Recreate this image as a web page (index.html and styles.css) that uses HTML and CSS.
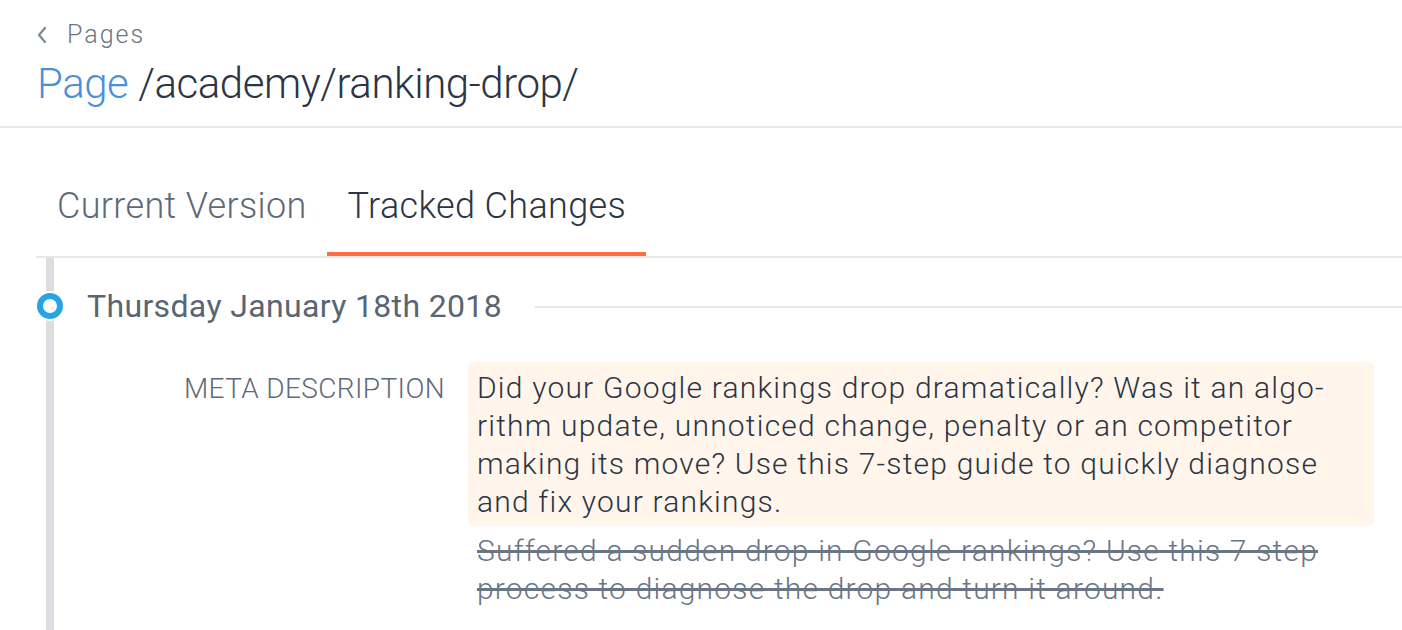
FILE: index.html
```html
<!DOCTYPE html>
<html>
  <head>
    <meta charset="utf-8">
    <title>Page /academy/ranking-drop/</title>
    <link rel="stylesheet" href="styles.css">
  </head>
  <body>
    <div class="header">
      <a class="back" href="#">
        <svg class="back_icon" width="10" height="18" viewBox="0 0 10 18">
          <path d="M8 2 L2 9 L8 16" fill="none" stroke="#7d8794" stroke-width="2.2" stroke-linecap="round" stroke-linejoin="round"/>
        </svg>
        Pages
      </a>
      <h1 class="title"><span class="title_kind">Page</span> /academy/ranking-drop/</h1>
    </div>

    <div class="content">
      <div class="tabs">
        <a class="tab" href="#">Current Version</a>
        <a class="tab tab_active" href="#">Tracked Changes</a>
      </div>

      <div class="timeline">
        <div class="date_row">
          <span class="dot"></span>
          <span class="date">Thursday January 18th 2018</span>
          <span class="date_line"></span>
        </div>

        <div class="field">
          <div class="field_label">META DESCRIPTION</div>
          <div class="field_values">
            <div class="value_new">Did your Google rankings drop dramatically? Was it an algo&shy;rithm update, unnoticed change, penalty or an competitor making its move? Use this 7-step guide to quickly diagnose and fix your rankings.</div>
            <div class="value_old">Suffered a sudden drop in Google rankings? Use this 7 step process to diagnose the drop and turn it around.</div>
          </div>
        </div>
      </div>
    </div>
  </body>
</html>
```

FILE: styles.css
```css
* {
  margin: 0;
  padding: 0;
  box-sizing: border-box;
}

body {
  background: #fff;
  font-family: "Roboto Light", Roboto, "Noto Sans", sans-serif;
  font-weight: 300;
  color: #2b3544;
  overflow: hidden;
}

a {
  text-decoration: none;
}

.header {
  padding: 20px 37px 17px;
  border-bottom: 2px solid #e8e8e8;
}

.back {
  display: flex;
  align-items: center;
  gap: 20px;
  font-size: 25px;
  line-height: 30px;
  letter-spacing: 2px;
  color: #6b7684;
}

.title {
  margin-top: 9px;
  font-size: 42px;
  line-height: 50px;
  font-weight: 300;
  letter-spacing: -0.45px;
  color: #2b3544;
}

.title_kind {
  color: #4a90d9;
}

.content {
  padding-left: 36px;
}

.tabs {
  display: flex;
  border-bottom: 2px solid #e8e8e8;
}

.tab {
  padding: 56px 20px 24px 21px;
  font-size: 36px;
  line-height: 44px;
  letter-spacing: 0.35px;
  color: #5f6a78;
  border-bottom: 4px solid transparent;
}

.tab_active {
  color: #2b3544;
  border-bottom-color: #ff6e3f;
}

.timeline {
  margin-left: 10px;
  border-left: 8px solid #dcdde1;
  min-height: 400px;
}

.date_row {
  display: flex;
  align-items: center;
  margin-left: -17px;
  padding-top: 28px;
}

.dot {
  width: 26px;
  height: 26px;
  border-radius: 50%;
  border: 6px solid #27a4e5;
  background: #fff;
  box-shadow: 0 0 0 2px #fff;
}

.date {
  margin-left: 24px;
  font-family: Roboto, "Noto Sans", sans-serif;
  font-size: 32px;
  line-height: 40px;
  font-weight: 400;
  letter-spacing: 0.35px;
  color: #5a6573;
}

.date_line {
  flex: 1;
  margin-left: 33px;
  margin-top: 2px;
  height: 2px;
  background: #e8e8e8;
}

.field {
  display: flex;
  align-items: baseline;
  gap: 23px;
  margin-top: 36px;
  margin-right: 28px;
}

.field_label {
  flex: 0 0 391px;
  text-align: right;
  font-size: 28px;
  letter-spacing: 0.38px;
  color: #5f6a78;
}

.field_values {
  flex: 1;
  font-size: 30px;
  line-height: 38px;
  letter-spacing: 1.2px;
}

.value_new {
  padding: 7px 9px 5px;
  background: #fff5eb;
  border-radius: 6px;
  color: #2b3544;
}

.value_old {
  margin-top: 6px;
  padding: 0 9px;
  color: #6b7684;
  text-decoration: line-through;
}
```
